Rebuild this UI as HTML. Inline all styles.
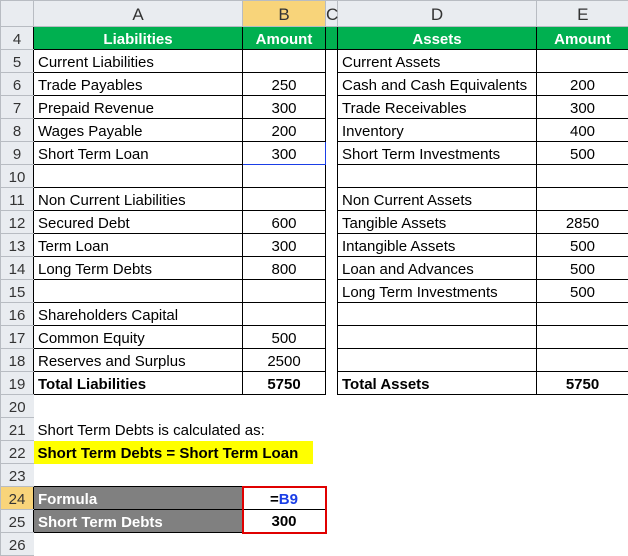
<!DOCTYPE html><html><head><style>
body{margin:0;width:628px;height:544px;overflow:hidden;background:#fff;font-family:"Liberation Sans",sans-serif;}
table{border-collapse:collapse;table-layout:fixed;position:absolute;left:0;top:0;width:628px;}
td{height:23px;padding:2px 4px 0;font-size:15px;color:#000;border:1px solid #d4d4d4;white-space:nowrap;overflow:visible;box-sizing:border-box;}
td.h{background:#e9ecf0;color:#333;text-align:center;padding:2px 0 0;border-color:#b8bcc2;border-right:none;font-size:15px}
td.s{background:#f8d47a;}
tr.top td{height:26px;font-size:17px}
.b{border:1px solid #000}
.r{text-align:center}
.g{background:#00b050;color:#fff;font-weight:bold;text-align:center;border:1px solid #000}
.n{border:none}
.gr{background:#808080;color:#fff;font-weight:bold;border:1px solid #000}
</style></head><body>
<table>
<colgroup><col style="width:33px"><col style="width:209px"><col style="width:83px"><col style="width:12px"><col style="width:199px"><col style="width:92px"></colgroup>
<tr class="top"><td class="h" style="border-right:1px solid #b8bcc2"></td><td class="h" style="border-right:1px solid #b8bcc2">A</td><td class="h s" style="border-right:1px solid #b8bcc2">B</td><td class="h" style="border-right:1px solid #b8bcc2">C</td><td class="h" style="border-right:1px solid #b8bcc2">D</td><td class="h">E</td></tr>
<tr><td class="h">4</td><td class="g">Liabilities</td><td class="g">Amount</td><td class="g"></td><td class="g">Assets</td><td class="g">Amount</td></tr>
<tr><td class="h">5</td><td class="b">Current Liabilities</td><td class="b r"></td><td class="n"></td><td class="b">Current Assets</td><td class="b r"></td></tr>
<tr><td class="h">6</td><td class="b">Trade Payables</td><td class="b r">250</td><td class="n"></td><td class="b">Cash and Cash Equivalents</td><td class="b r">200</td></tr>
<tr><td class="h">7</td><td class="b">Prepaid Revenue</td><td class="b r">300</td><td class="n"></td><td class="b">Trade Receivables</td><td class="b r">300</td></tr>
<tr><td class="h">8</td><td class="b">Wages Payable</td><td class="b r">200</td><td class="n"></td><td class="b">Inventory</td><td class="b r">400</td></tr>
<tr><td class="h">9</td><td class="b">Short Term Loan</td><td class="b r" style="border:1px solid #1a3ee6">300</td><td class="n"></td><td class="b">Short Term Investments</td><td class="b r">500</td></tr>
<tr><td class="h">10</td><td class="b"></td><td class="b"></td><td class="n"></td><td class="b"></td><td class="b"></td></tr>
<tr><td class="h">11</td><td class="b">Non Current Liabilities</td><td class="b"></td><td class="n"></td><td class="b">Non Current Assets</td><td class="b"></td></tr>
<tr><td class="h">12</td><td class="b">Secured Debt</td><td class="b r">600</td><td class="n"></td><td class="b">Tangible Assets</td><td class="b r">2850</td></tr>
<tr><td class="h">13</td><td class="b">Term Loan</td><td class="b r">300</td><td class="n"></td><td class="b">Intangible Assets</td><td class="b r">500</td></tr>
<tr><td class="h">14</td><td class="b">Long Term Debts</td><td class="b r">800</td><td class="n"></td><td class="b">Loan and Advances</td><td class="b r">500</td></tr>
<tr><td class="h">15</td><td class="b"></td><td class="b"></td><td class="n"></td><td class="b">Long Term Investments</td><td class="b r">500</td></tr>
<tr><td class="h">16</td><td class="b">Shareholders Capital</td><td class="b"></td><td class="n"></td><td class="b"></td><td class="b"></td></tr>
<tr><td class="h">17</td><td class="b">Common Equity</td><td class="b r">500</td><td class="n"></td><td class="b"></td><td class="b"></td></tr>
<tr><td class="h">18</td><td class="b">Reserves and Surplus</td><td class="b r">2500</td><td class="n"></td><td class="b"></td><td class="b"></td></tr>
<tr><td class="h">19</td><td class="b" style="font-weight:bold">Total Liabilities</td><td class="b r" style="font-weight:bold">5750</td><td class="n"></td><td class="b" style="font-weight:bold">Total Assets</td><td class="b r" style="font-weight:bold">5750</td></tr>
<tr><td class="h">20</td><td class="n"></td><td class="n"></td><td class="n"></td><td class="n"></td><td class="n"></td></tr>
<tr><td class="h">21</td><td class="n">Short Term Debts is calculated as:</td><td class="n"></td><td class="n"></td><td class="n"></td><td class="n"></td></tr>
<tr><td class="h">22</td><td class="n" style="background:#ffff00;font-weight:bold">Short Term Debts = Short Term Loan</td><td class="n" style="background:linear-gradient(90deg,#ffff00 70px,transparent 70px)"></td><td class="n"></td><td class="n"></td><td class="n"></td></tr>
<tr><td class="h">23</td><td class="n"></td><td class="n"></td><td class="n"></td><td class="n"></td><td class="n"></td></tr>
<tr><td class="h s">24</td><td class="gr">Formula</td><td class="r" style="font-weight:bold;border:2px solid #e00000;border-bottom:1px solid #000">=<span style="color:#1a3ee6">B9</span></td><td class="n"></td><td class="n"></td><td class="n"></td></tr>
<tr><td class="h">25</td><td class="gr">Short Term Debts</td><td class="r" style="font-weight:bold;border:2px solid #e00000;border-top:1px solid #000">300</td><td class="n"></td><td class="n"></td><td class="n"></td></tr>
<tr><td class="h">26</td><td class="n"></td><td class="n"></td><td class="n"></td><td class="n"></td><td class="n"></td></tr>
</table>
</body></html>
